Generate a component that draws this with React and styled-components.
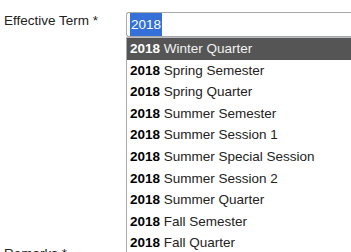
import React from "react";
import styled, { createGlobalStyle } from "styled-components";

const GlobalStyle = createGlobalStyle`
  html, body {
    margin: 0;
    padding: 0;
    background: #fff;
    overflow: hidden;
  }
  body {
    font-family: "Liberation Sans", Arial, sans-serif;
    font-size: 13.5px;
    color: #222;
  }
`;

const terms = [
  "Winter Quarter",
  "Spring Semester",
  "Spring Quarter",
  "Summer Semester",
  "Summer Session 1",
  "Summer Special Session",
  "Summer Session 2",
  "Summer Quarter",
  "Fall Semester",
  "Fall Quarter",
];

const Form = styled.div`
  padding-top: 12px;
  display: flex;
  flex-direction: column;
  gap: 208px;
`;

const FieldRow = styled.div`
  display: grid;
  grid-template-columns: 126px 1fr;
  align-items: start;
`;

const Label = styled.label`
  padding-left: 4px;
  margin-top: 1px;
  line-height: 16px;
  color: #222;
  white-space: nowrap;
`;

const Combo = styled.div`
  position: relative;
  width: 300px;
`;

const Input = styled.div`
  box-sizing: border-box;
  height: 25px;
  border: 1px solid #a9a9a9;
  border-right: none;
  border-radius: 3px 0 0 3px;
  padding: 0 0 0 3px;
  display: flex;
  align-items: center;
  background: #fff;
`;

const Selected = styled.span`
  background: #3470d8;
  color: #fff;
  line-height: 23px;
  padding: 0 1px;
`;

const List = styled.ul`
  position: absolute;
  top: 100%;
  left: 0;
  width: 300px;
  margin: 0;
  padding: 0;
  list-style: none;
  background: #fff;
  border-left: 1px solid #a9a9a9;
  border-top: 1px solid #b8bcc4;
  z-index: 2;
`;

const Item = styled.li`
  padding: 3px 3px;
  line-height: 15.6px;
  white-space: nowrap;
  background: ${(p) => (p.$active ? "#555" : "#fff")};
  color: ${(p) => (p.$active ? "#f2f2f2" : "#222")};

  b {
    color: ${(p) => (p.$active ? "#fff" : "#000")};
  }
`;

export default function App() {
  return (
    <>
      <GlobalStyle />
      <Form>
        <FieldRow>
          <Label>Effective Term *</Label>
          <Combo>
            <Input>
              <Selected>2018</Selected>
            </Input>
            <List>
              {terms.map((t, i) => (
                <Item key={t} $active={i === 0}>
                  <b>2018</b> {t}
                </Item>
              ))}
            </List>
          </Combo>
        </FieldRow>
        <FieldRow>
          <Label>Remarks *</Label>
        </FieldRow>
      </Form>
    </>
  );
}
